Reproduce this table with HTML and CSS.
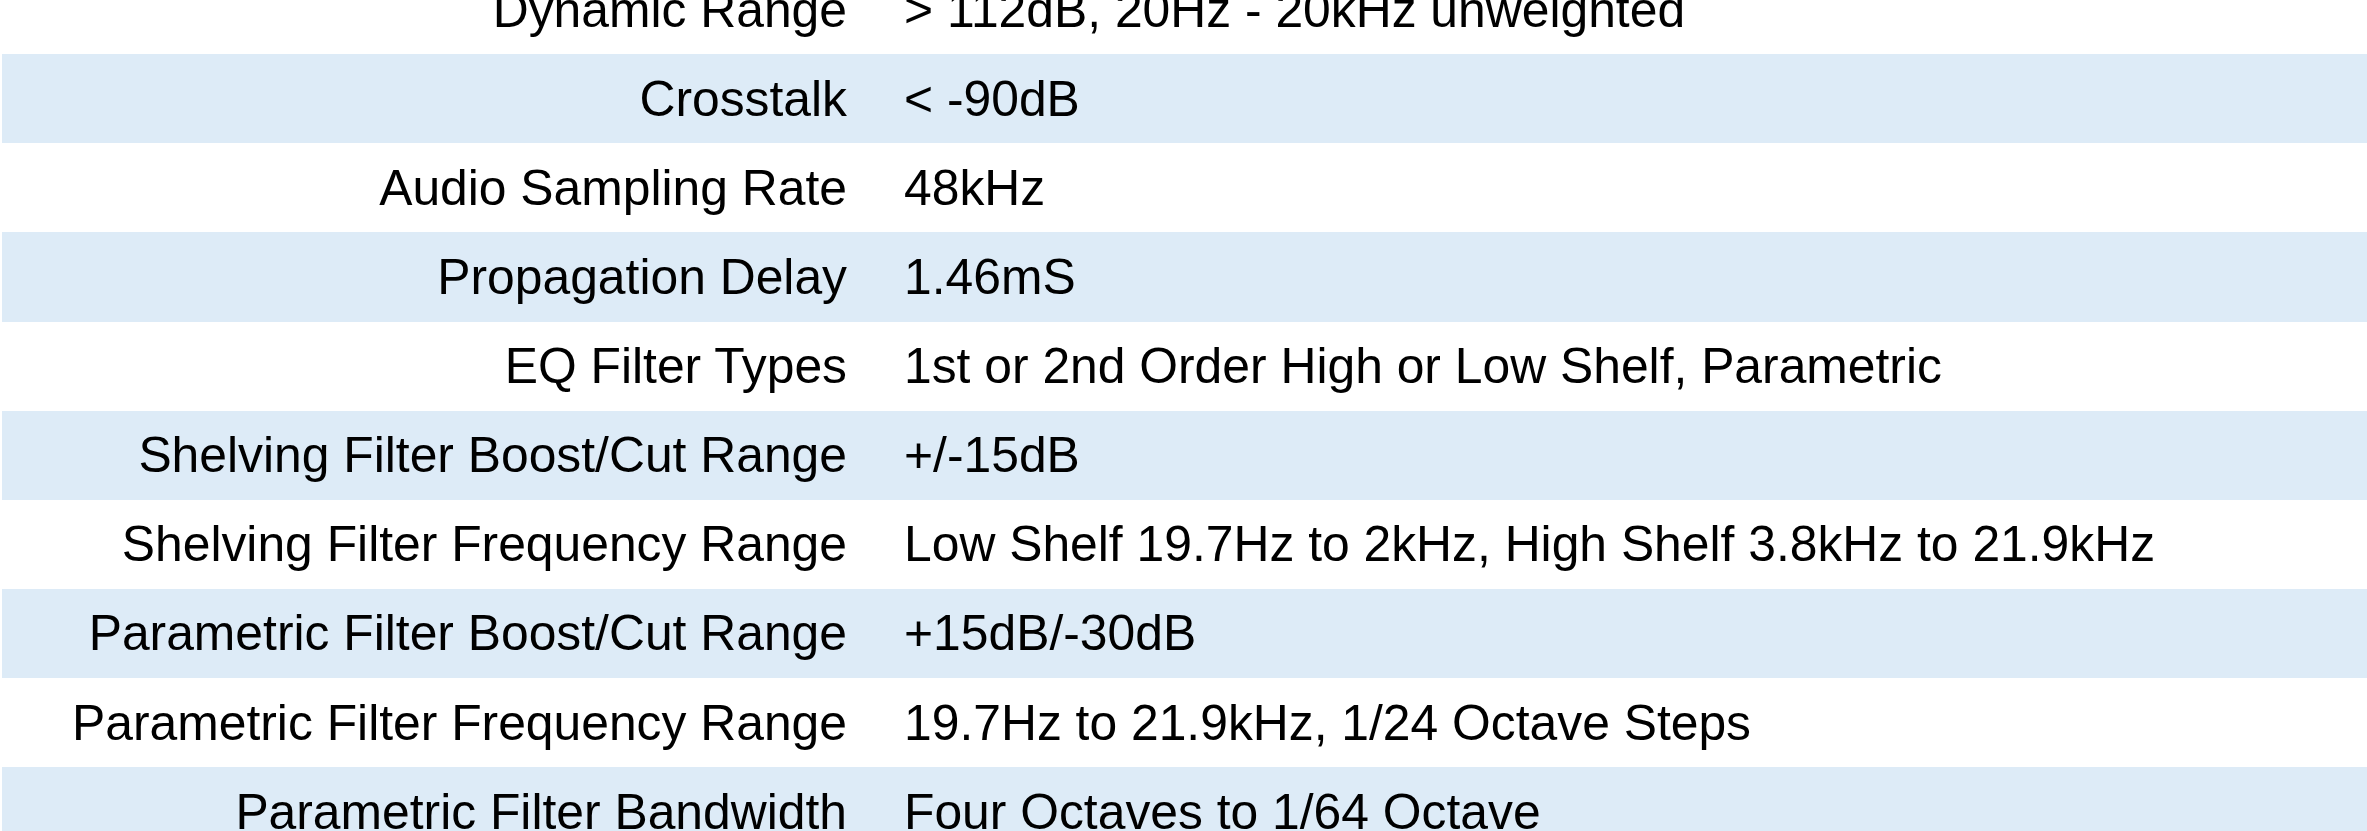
FILE: index.html
```html
<!DOCTYPE html>
<html>
<head>
<meta charset="utf-8">
<link rel="stylesheet" href="styles.css">
</head>
<body>
<div class="specs">
  <div class="row"><div class="label">Dynamic Range</div><div class="value">&gt; 112dB, 20Hz - 20kHz unweighted</div></div>
  <div class="row alt"><div class="label">Crosstalk</div><div class="value">&lt; -90dB</div></div>
  <div class="row"><div class="label">Audio Sampling Rate</div><div class="value">48kHz</div></div>
  <div class="row alt"><div class="label">Propagation Delay</div><div class="value">1.46mS</div></div>
  <div class="row"><div class="label">EQ Filter Types</div><div class="value">1st or 2nd Order High or Low Shelf, Parametric</div></div>
  <div class="row alt"><div class="label">Shelving Filter Boost/Cut Range</div><div class="value">+/-15dB</div></div>
  <div class="row"><div class="label">Shelving Filter Frequency Range</div><div class="value">Low Shelf 19.7Hz to 2kHz, High Shelf 3.8kHz to 21.9kHz</div></div>
  <div class="row alt"><div class="label">Parametric Filter Boost/Cut Range</div><div class="value">+15dB/-30dB</div></div>
  <div class="row"><div class="label">Parametric Filter Frequency Range</div><div class="value">19.7Hz to 21.9kHz, 1/24 Octave Steps</div></div>
  <div class="row alt"><div class="label">Parametric Filter Bandwidth</div><div class="value">Four Octaves to 1/64 Octave</div></div>
</div>
</body>
</html>
```
FILE: styles.css
```css
html, body {
  margin: 0;
  padding: 0;
  background: #ffffff;
  overflow: hidden;
}
body {
  font-family: "Liberation Sans", Arial, sans-serif;
  font-size: 49.8px;
  color: #000000;
}
.specs {
  margin-top: -35px;
  margin-left: 2px;
  display: flex;
  flex-direction: column;
}
.row {
  display: flex;
  align-items: center;
  height: 89.125px;
  white-space: nowrap;
}
.row.alt {
  background: #ddebf7;
}
.label {
  width: 845px;
  flex: none;
  text-align: right;
}
.value {
  padding-left: 57px;
}
```
